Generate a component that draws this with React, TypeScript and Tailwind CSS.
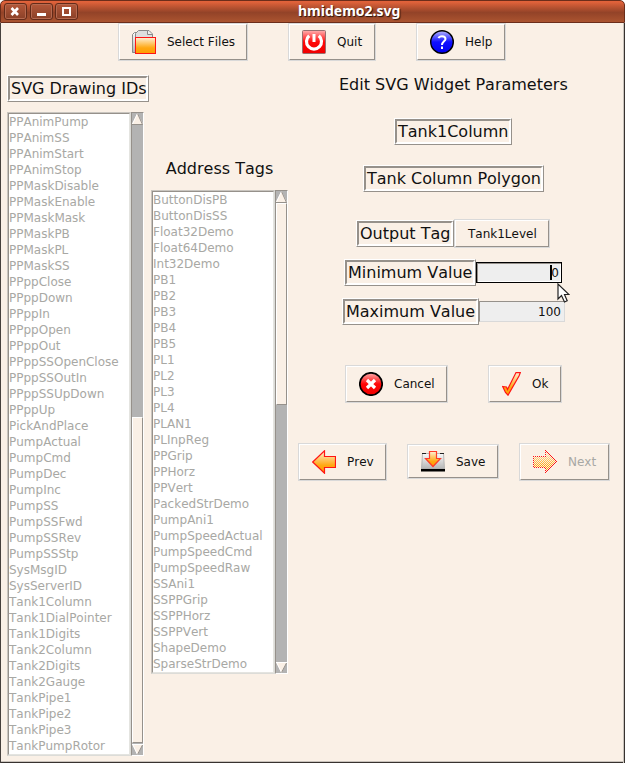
import type { ReactNode } from 'react';

const drawingIds = [
  'PPAnimPump', 'PPAnimSS', 'PPAnimStart', 'PPAnimStop', 'PPMaskDisable', 'PPMaskEnable', 'PPMaskMask', 'PPMaskPB',
  'PPMaskPL', 'PPMaskSS', 'PPppClose', 'PPppDown', 'PPppIn', 'PPppOpen', 'PPppOut', 'PPppSSOpenClose', 'PPppSSOutIn',
  'PPppSSUpDown', 'PPppUp', 'PickAndPlace', 'PumpActual', 'PumpCmd', 'PumpDec', 'PumpInc', 'PumpSS', 'PumpSSFwd',
  'PumpSSRev', 'PumpSSStp', 'SysMsgID', 'SysServerID', 'Tank1Column', 'Tank1DialPointer', 'Tank1Digits',
  'Tank2Column', 'Tank2Digits', 'Tank2Gauge', 'TankPipe1', 'TankPipe2', 'TankPipe3', 'TankPumpRotor',
];

const addressTags = [
  'ButtonDisPB', 'ButtonDisSS', 'Float32Demo', 'Float64Demo', 'Int32Demo', 'PB1', 'PB2', 'PB3', 'PB4', 'PB5', 'PL1',
  'PL2', 'PL3', 'PL4', 'PLAN1', 'PLInpReg', 'PPGrip', 'PPHorz', 'PPVert', 'PackedStrDemo', 'PumpAni1',
  'PumpSpeedActual', 'PumpSpeedCmd', 'PumpSpeedRaw', 'SSAni1', 'SSPPGrip', 'SSPPHorz', 'SSPPVert', 'ShapeDemo',
  'SparseStrDemo',
];

function Gradients() {
  return (
    <svg width="0" height="0" className="absolute">
      <defs>
        <linearGradient id="orange" x1="0" y1="0" x2="0" y2="1">
          <stop offset="0" stopColor="#fff0d8" />
          <stop offset="0.65" stopColor="#ffa812" />
          <stop offset="1" stopColor="#ff9c00" />
        </linearGradient>
        <linearGradient id="red" x1="0" y1="0" x2="0" y2="1">
          <stop offset="0" stopColor="#ffb0b0" />
          <stop offset="0.5" stopColor="#ff0808" />
          <stop offset="1" stopColor="#f00000" />
        </linearGradient>
        <linearGradient id="blue" x1="0" y1="0" x2="0" y2="1">
          <stop offset="0" stopColor="#b8b8ff" />
          <stop offset="0.5" stopColor="#1010ff" />
          <stop offset="1" stopColor="#0000f0" />
        </linearGradient>
        <linearGradient id="silver" x1="0" y1="0" x2="0" y2="1">
          <stop offset="0" stopColor="#fafafa" />
          <stop offset="1" stopColor="#b4b4b4" />
        </linearGradient>
        <pattern id="stipple" width="2" height="2" patternUnits="userSpaceOnUse">
          <rect width="1" height="1" fill="#fff" />
          <rect x="1" y="1" width="1" height="1" fill="#fff" />
        </pattern>
        <mask id="dither">
          <rect width="24" height="24" fill="url(#stipple)" />
        </mask>
      </defs>
    </svg>
  );
}

function Icon({ children, width = 24 }: { children: ReactNode; width?: number }) {
  return (
    <svg width={width} height="24" viewBox={`0 0 ${width} 24`} className="block shrink-0">
      {children}
    </svg>
  );
}

const filesIcon = (
  <Icon>
    <path d="M.5 22.500V4.500L2.500 2.500H6V22.500Z" fill="url(#silver)" stroke="#888" />
    <path d="M3.500 22V3.500L6.500.5H17L20.500 4V22Z" fill="#dedede" stroke="#888" />
    <path d="M15.500.5V4.500H20.500" fill="#eee" stroke="#888" />
    <rect x="3.500" y="7.500" width="20" height="16" fill="url(#orange)" stroke="#ff1414" />
  </Icon>
);

const quitIcon = (
  <Icon>
    <rect x=".5" y=".5" width="23" height="23" rx="1" fill="url(#red)" stroke="#987070" />
    <path d="M7.200 5.800A7.500 7.500 0 1 0 16.800 5.800" fill="none" stroke="#fff" strokeWidth="3.200" />
    <path d="M12 4V12" stroke="#fff" strokeWidth="3" />
  </Icon>
);

const helpIcon = (
  <Icon>
    <circle cx="12" cy="12" r="11.300" fill="url(#blue)" stroke="#000" strokeWidth="1.400" />
    <path d="M8.500 8.200C9 6.800 10.300 6.200 12 6.200C14 6.200 15.500 7.300 15.500 9C15.500 11.300 12 11.500 12 15" fill="none" stroke="#fff" strokeWidth="2" />
    <rect x="11" y="16.500" width="2" height="2.500" fill="#fff" />
  </Icon>
);

const cancelIcon = (
  <Icon>
    <circle cx="12" cy="12" r="11.200" fill="url(#red)" stroke="#000" strokeWidth="1.700" />
    <path d="M8 8L16 16M16 8L8 16" stroke="#fff" strokeWidth="3.200" />
  </Icon>
);

const okIcon = (
  <Icon width={19}>
    <path d="M.7 14.500L4.500 15L5.500 17.500L14 .6H18.300L17 4L6 23.200L3.500 20.500Z" fill="url(#orange)" stroke="#ff1414" strokeWidth="1.200" />
  </Icon>
);

const prevIcon = (
  <Icon>
    <path d="M.7 12L12.500.8V6.500H23.500V17.500H12.500V23.200Z" fill="url(#orange)" stroke="#ff1414" strokeWidth="1.200" />
  </Icon>
);

const nextIcon = (
  <Icon>
    <g mask="url(#dither)" shapeRendering="crispEdges">
      <path d="M23.500 12L12.500 1V6.500H.5V17.500H12.500V23Z" fill="url(#orange)" stroke="#ff1414" />
    </g>
  </Icon>
);

const saveIcon = (
  <Icon>
    <path d="M1.500 3.500H22.500L23.500 19H.5Z" fill="url(#silver)" stroke="#aaa" strokeWidth=".8" />
    <path d="M1 3.500H5M19 3.500H23" stroke="#222" />
    <rect y="19" width="24" height="2.500" fill="#000" />
    <path d="M8.500 1.500H15.500V8.500H19.500L12 16.500L4.500 8.500H8.500Z" fill="url(#orange)" stroke="#ff3c28" strokeWidth="1.200" />
  </Icon>
);

function PushButton({ icon, label, size, muted }: { icon?: ReactNode; label: string; size: string; muted?: boolean }) {
  return (
    <button className={`block shrink-0 border border-[#d9d9d9] ${size}`}>
      <span className="flex h-full items-center border-t border-r border-b border-l border-t-white border-l-white border-r-[#96918b] border-b-[#96918b] pl-px">
        {icon ? <span className="ml-[11px] mr-[11px]">{icon}</span> : <span className="w-[11px]" />}
        <span className={`whitespace-pre text-xs leading-4 ${muted ? 'text-[#a8a8a4]' : 'text-[#111]'}`}>{label}</span>
      </span>
    </button>
  );
}

function GrooveLabel({ text, size }: { text: string; size: string }) {
  return (
    <div className={`shrink-0 border border-t-white border-l-white border-r-[#96918b] border-b-[#96918b] ${size}`}>
      <div className="h-full border-2 border-t-[#96918b] border-l-[#96918b] border-r-white border-b-white pl-px text-base leading-[21px] whitespace-pre text-[#111]">
        {text}
      </div>
    </div>
  );
}

function ListBox({ items, height, before, thumb }: { items: string[]; height: string; before: string; thumb: string }) {
  return (
    <div className={`flex w-[137px] ${height}`}>
      <div className="w-[124px] border border-t-[#c9c5bf] border-l-[#c9c5bf] border-r-[#dcdcd8] border-b-[#dcdcd8]">
        <div className="h-full border border-t-[#96918b] border-l-[#96918b] border-r-[#e4e4e0] border-b-[#e4e4e0] bg-white text-xs leading-4 text-[#a8a8a4]">
          {items.map((item) => (
            <div key={item} className="h-4 whitespace-pre">{item}</div>
          ))}
        </div>
      </div>
      <div className="flex w-[13px] flex-col border border-t-[#96918b] border-l-[#96918b] border-r-white border-b-white bg-[#b3b3b3]">
        <svg width="11" height="12" viewBox="0 0 11 12" className="block shrink-0">
          <path d="M5.500 0L11 11H0Z" fill="#faf0e6" />
          <path d="M5.500.5L.5 11" stroke="#fff" fill="none" />
          <path d="M5.500.5L10.500 11.500H0" stroke="#96918b" fill="none" />
        </svg>
        <div className={before} />
        <div className={`border border-t-white border-l-white border-r-[#96918b] border-b-[#96918b] bg-[#faf0e6] ${thumb}`} />
        <svg width="11" height="11" viewBox="0 0 11 11" className="mt-auto block shrink-0">
          <path d="M0 0H11L5.500 11Z" fill="#faf0e6" />
          <path d="M0 .5H11M.5 0L5.500 10.500" stroke="#fff" fill="none" />
          <path d="M10.500 1L5.500 10.500" stroke="#96918b" fill="none" />
        </svg>
      </div>
    </div>
  );
}

function WindowButton({ children }: { children: ReactNode }) {
  return (
    <div className="h-[17px] w-[23px] rounded-[3px] border border-[#632b19] bg-linear-to-b from-[#b4583a] to-[#8a4128] shadow-[inset_0_0_0_1px_#b66a50]">
      <svg width="21" height="15" viewBox="0 0 21 15" fill="none" stroke="#fff" className="block">
        {children}
      </svg>
    </div>
  );
}

export default function App() {
  return (
    <div className="flex h-[763px] w-[625px] flex-col overflow-hidden bg-[#faf0e6] font-['DejaVu_Sans',sans-serif] [font-kerning:none] shadow-[inset_1px_0_#46403c,inset_-1px_0_#37322f,inset_-2px_0_#c9c3bc,inset_0_-1px_#37322f,inset_0_-2px_#c9c3bc]">
      <Gradients />
      <div className="h-[23px] shrink-0 bg-white">
        <header className="relative flex h-full items-start gap-[2px] rounded-t-[5px] border border-[#6b2d1a] bg-linear-to-b from-[#e0623a] from-5% via-[#934328] via-55% to-[#ab5430] pl-[3px] pt-[2px]">
          <WindowButton>
            <path d="M6.500 4L13 11M13 4L6.500 11" strokeWidth="2.600" />
          </WindowButton>
          <div className="ml-[1px]">
            <WindowButton>
              <path d="M6 10.500H15" strokeWidth="3" />
            </WindowButton>
          </div>
          <WindowButton>
            <rect x="7" y="4" width="7" height="7" strokeWidth="2" />
          </WindowButton>
          <h1 className="absolute inset-x-0 top-0 pl-[297px] font-['Noto_Sans',sans-serif] text-[14px] leading-[20px] font-bold text-white [text-shadow:1px_1px_1px_#27120b]">
            hmidemo2.svg
          </h1>
        </header>
      </div>
      <div className="flex shrink-0 gap-10 pl-[118px]">
        <PushButton icon={filesIcon} label="Select Files" size="h-[38px] w-[130px]" />
        <PushButton icon={quitIcon} label="Quit" size="h-[38px] w-[88px]" />
        <PushButton icon={helpIcon} label="Help" size="h-[38px] w-[90px]" />
      </div>
      <main className="flex items-start pl-[7px]">
        <section className="w-[144px] pt-[14px]">
          <GrooveLabel text="SVG Drawing IDs" size="h-[27px] w-[142px]" />
          <div className="mt-[10px]">
            <ListBox items={drawingIds} height="h-[644px]" before="h-[292px] shrink-0" thumb="h-[326px] shrink-0" />
          </div>
        </section>
        <section className="w-[137px] pt-[97px]">
          <h2 className="mb-[11px] text-center text-base leading-[21px] text-[#111]">Address Tags</h2>
          <ListBox items={addressTags} height="h-[484px]" before="h-0" thumb="h-[202px] shrink-0" />
        </section>
        <section className="flex-1 pt-[13px]">
          <h2 className="ml-[51px] text-base leading-[21px] whitespace-pre text-[#111]">Edit SVG Widget Parameters</h2>
          <div className="mt-[23px] ml-[106px]">
            <GrooveLabel text="Tank1Column" size="h-[27px] w-[118px]" />
          </div>
          <div className="mt-[20px] ml-[75px]">
            <GrooveLabel text="Tank Column Polygon" size="h-[27px] w-[181px]" />
          </div>
          <div className="mt-[27px] ml-[68px] flex items-center">
            <GrooveLabel text="Output Tag" size="h-[27px] w-[98px]" />
            <PushButton label="Tank1Level" size="h-[29px] w-[96px]" />
          </div>
          <div className="mt-[11px] ml-[56px] flex items-center">
            <GrooveLabel text="Minimum Value" size="h-[27px] w-[132px]" />
            <div className="relative flex h-[21px] w-[86px] items-center justify-end border border-black bg-[#eee] pr-[2px] text-xs leading-4 text-[#111] shadow-[inset_1px_1px_#96918b,inset_-1px_-1px_#fff]">
              <span className="h-[15px] w-[2px] bg-black" />
              <span className="-ml-px">0</span>
              <svg width="13" height="20" viewBox="0 0 13 20" className="absolute top-[20px] left-[80px] z-10">
                <path d="M1 1V16L4.500 12.500L7.500 19L10.200 17.800L7.500 11.500H12Z" fill="#fff" stroke="#222" strokeWidth="1.200" />
              </svg>
            </div>
          </div>
          <div className="mt-[12px] ml-[54px] flex items-center">
            <GrooveLabel text="Maximum Value" size="h-[27px] w-[137px]" />
            <div className="flex h-[21px] w-[86px] items-center justify-end border border-t-[#96918b] border-l-[#96918b] border-r-[#d9d9d9] border-b-[#d9d9d9] bg-[#eee] pr-[3px] text-xs leading-4 text-[#111]">
              100
            </div>
          </div>
          <div className="mt-[40px] ml-[57px] flex gap-10">
            <PushButton icon={cancelIcon} label="Cancel" size="h-[38px] w-[103px]" />
            <PushButton icon={okIcon} label="Ok" size="h-[38px] w-[74px]" />
          </div>
          <div className="mt-[40px] ml-[10px] flex items-start gap-5">
            <PushButton icon={prevIcon} label="Prev" size="h-[38px] w-[89px]" />
            <div className="pt-px">
              <PushButton icon={saveIcon} label="Save" size="h-[35px] w-[92px]" />
            </div>
            <PushButton icon={nextIcon} label="Next" size="h-[38px] w-[91px]" muted />
          </div>
        </section>
      </main>
    </div>
  );
}
